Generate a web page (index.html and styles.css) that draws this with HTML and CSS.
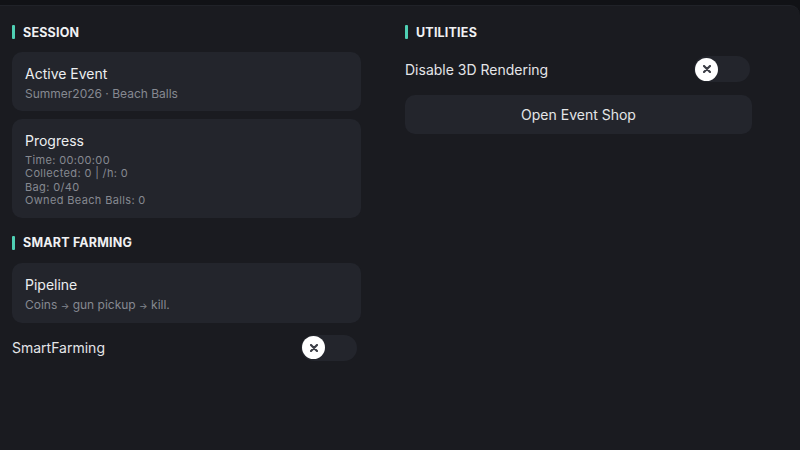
FILE: index.html
```html
<!DOCTYPE html>
<html lang="en">
<head>
    <meta charset="UTF-8">
    <meta name="viewport" content="width=device-width, initial-scale=1.0">
    <title>Event Farm</title>
    <link rel="stylesheet" href="styles.css">
</head>
<body>
    <div class="window">
        <div class="column">
            <div class="section-title">SESSION</div>
            <div class="card">
                <div class="card-title">Active Event</div>
                <div class="card-text">Summer2026 · Beach Balls</div>
            </div>
            <div class="card">
                <div class="card-title">Progress</div>
                <div class="card-text lines">
                    <div>Time: 00:00:00</div>
                    <div>Collected: 0 | /h: 0</div>
                    <div>Bag: 0/40</div>
                    <div>Owned Beach Balls: 0</div>
                </div>
            </div>
            <div class="section-title">SMART FARMING</div>
            <div class="card">
                <div class="card-title">Pipeline</div>
                <div class="card-text">Coins <span class="arrow">→</span> gun pickup <span class="arrow">→</span> kill.</div>
            </div>
            <div class="toggle-row">
                <span>SmartFarming</span>
                <div class="toggle">
                    <div class="knob">
                        <svg width="8" height="8" viewBox="0 0 8 8"><path d="M1 1L7 7M7 1L1 7" stroke="#3c3e46" stroke-width="2.2" stroke-linecap="round"/></svg>
                    </div>
                </div>
            </div>
        </div>

        <div class="column">
            <div class="section-title">UTILITIES</div>
            <div class="toggle-row">
                <span>Disable 3D Rendering</span>
                <div class="toggle">
                    <div class="knob">
                        <svg width="8" height="8" viewBox="0 0 8 8"><path d="M1 1L7 7M7 1L1 7" stroke="#3c3e46" stroke-width="2.2" stroke-linecap="round"/></svg>
                    </div>
                </div>
            </div>
            <button class="button">Open Event Shop</button>
        </div>
    </div>
</body>
</html>
```

FILE: styles.css
```css
body {
    margin: 0;
    background-color: #111216;
    font-family: Inter, "Noto Sans", sans-serif;
    color: #e4e5e8;
}
.window {
    margin-top: 5px;
    height: 445px;
    box-sizing: border-box;
    background-color: #1a1b20;
    border-top: 1px solid #202228;
    border-top-right-radius: 10px;
    display: grid;
    grid-template-columns: 349px 349px;
    column-gap: 44px;
    padding: 19px 0 0 12px;
    align-items: start;
}
.column {
    display: flex;
    flex-direction: column;
}
.section-title {
    display: flex;
    align-items: center;
    height: 14px;
    font-size: 12.5px;
    font-weight: 700;
    letter-spacing: 0.2px;
    color: #f0f1f3;
    margin-bottom: 13px;
}
.section-title::before {
    content: "";
    width: 3px;
    height: 14px;
    border-radius: 1px;
    background-color: #4fd0b4;
    margin-right: 8px;
}
.card {
    background-color: #23252c;
    border-radius: 10px;
    padding: 13px 13px 10px;
    margin-bottom: 8px;
}
.card + .section-title {
    margin-top: 10px;
}
.card-title {
    font-size: 14px;
    line-height: 18px;
    color: #eceef0;
    margin-bottom: 4px;
}
.card-text {
    font-size: 12px;
    line-height: 14px;
    color: #868991;
}
.lines {
    font-size: 11px;
    letter-spacing: 0.35px;
    line-height: 13.4px;
}
.arrow {
    font-size: 9px;
}
.toggle-row {
    display: flex;
    justify-content: space-between;
    align-items: center;
    padding: 4px 4px 0 0;
    font-size: 14px;
    margin-bottom: 13px;
}
.toggle {
    width: 56px;
    height: 26px;
    border-radius: 13px;
    background-color: #23252c;
    display: flex;
    align-items: center;
    padding-left: 1px;
    box-sizing: border-box;
}
.knob {
    width: 23px;
    height: 23px;
    border-radius: 50%;
    background-color: #ffffff;
    display: flex;
    justify-content: center;
    align-items: center;
}
.button {
    height: 39px;
    margin-right: 2px;
    border: none;
    border-radius: 10px;
    background-color: #23252c;
    color: #e4e5e8;
    font-family: inherit;
    font-size: 14px;
    cursor: pointer;
}
```
